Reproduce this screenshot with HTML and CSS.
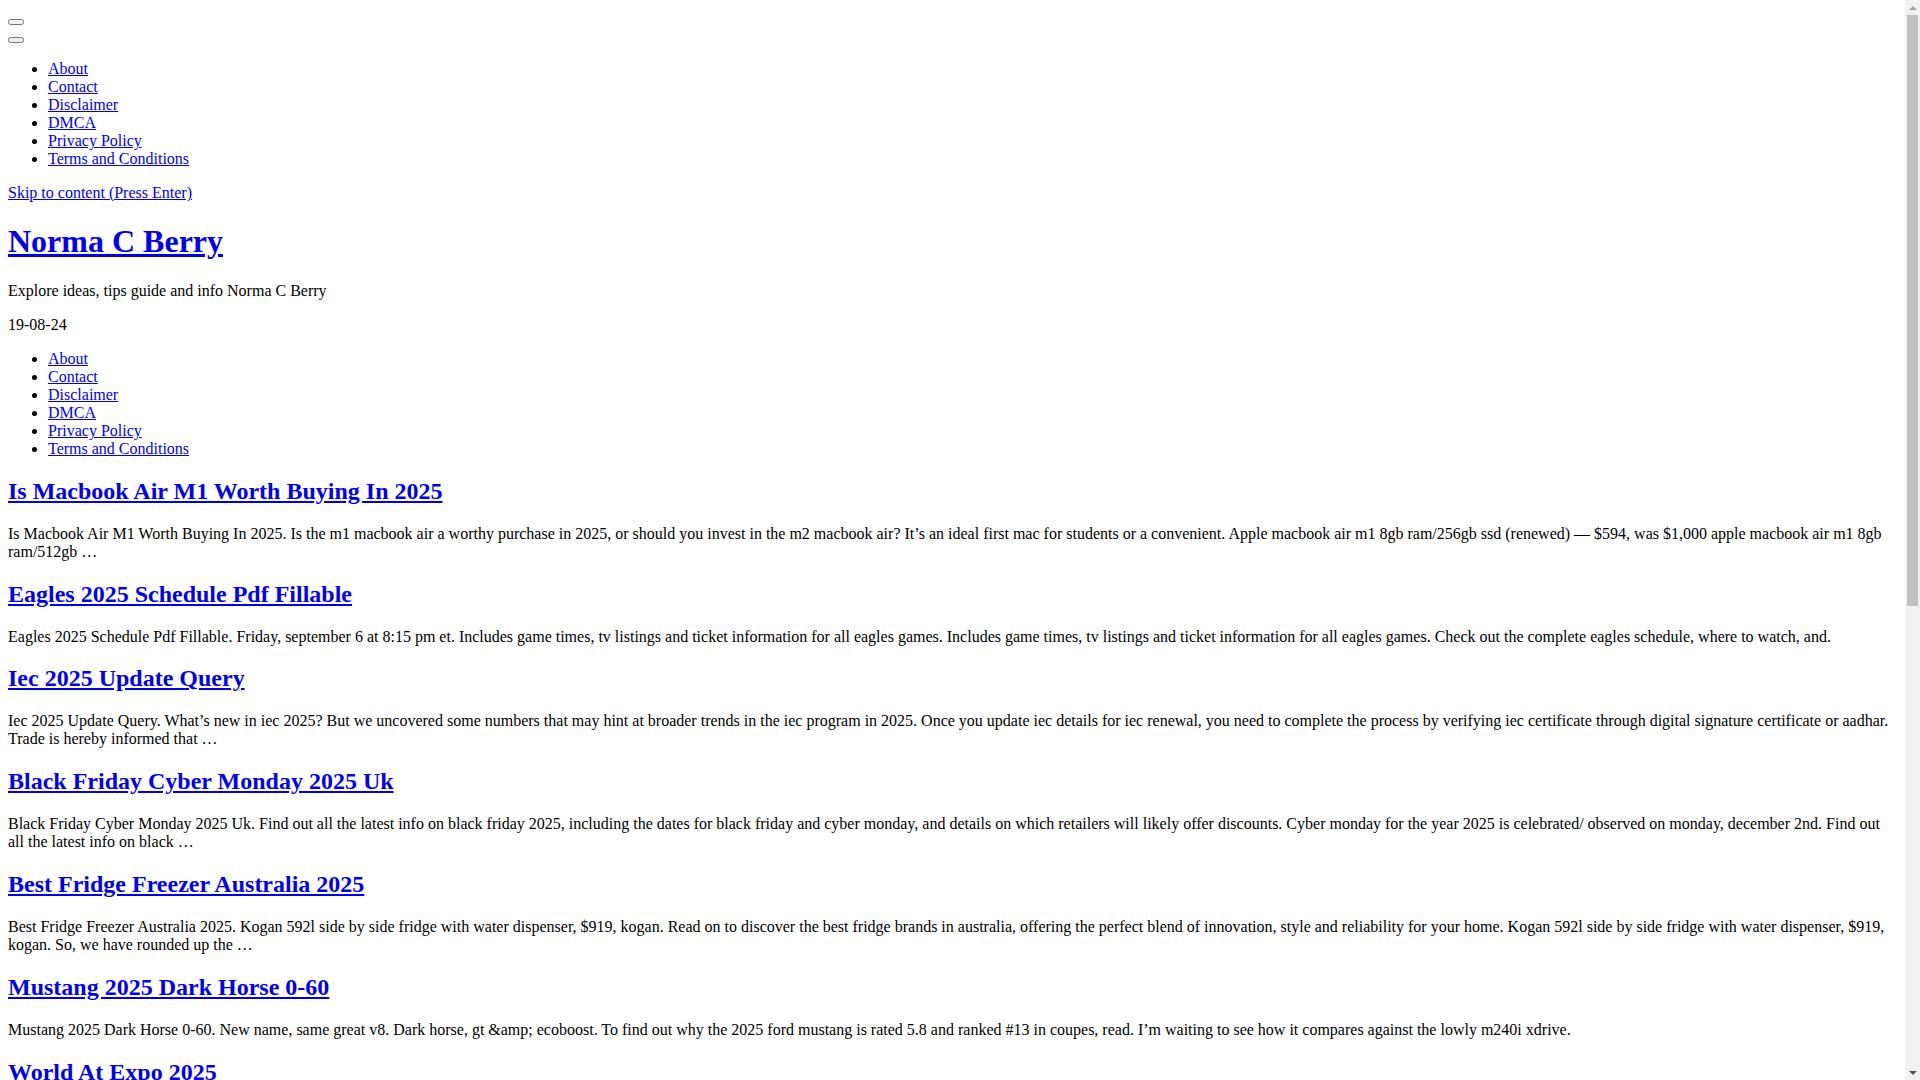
FILE: index.html
```html
<!DOCTYPE html>
<html lang="en">
<head>
<meta charset="utf-8">
<title>Norma C Berry</title>
<link rel="stylesheet" href="styles.css">
</head>
<body class="page">
<div class="toggle-row"><button class="toggle" type="button"></button></div>
<div class="toggle-row"><button class="toggle" type="button"></button></div>
<ul class="menu">
<li><a href="#">About</a></li>
<li><a href="#">Contact</a></li>
<li><a href="#">Disclaimer</a></li>
<li><a href="#">DMCA</a></li>
<li><a href="#">Privacy Policy</a></li>
<li><a href="#">Terms and Conditions</a></li>
</ul>
<a class="skip-link" href="#content">Skip to content (Press Enter)</a>
<header class="site-header">
<h1 class="site-title"><a href="#">Norma C Berry</a></h1>
<p class="site-desc">Explore ideas, tips guide and info Norma C Berry</p>
<p class="site-date">19-08-24</p>
<ul class="menu">
<li><a href="#">About</a></li>
<li><a href="#">Contact</a></li>
<li><a href="#">Disclaimer</a></li>
<li><a href="#">DMCA</a></li>
<li><a href="#">Privacy Policy</a></li>
<li><a href="#">Terms and Conditions</a></li>
</ul>
</header>
<main id="content" class="posts">
<article class="post">
<h2 class="post-title"><a href="#">Is Macbook Air M1 Worth Buying In 2025</a></h2>
<p class="post-excerpt">Is Macbook Air M1 Worth Buying In 2025. Is the m1 macbook air a worthy purchase in 2025, or should you invest in the m2 macbook air? It’s an ideal first mac for students or a convenient. Apple macbook air m1 8gb ram/256gb ssd (renewed) — $594, was $1,000 apple macbook air m1 8gb ram/512gb …</p>
</article>
<article class="post">
<h2 class="post-title"><a href="#">Eagles 2025 Schedule Pdf Fillable</a></h2>
<p class="post-excerpt">Eagles 2025 Schedule Pdf Fillable. Friday, september 6 at 8:15 pm et. Includes game times, tv listings and ticket information for all eagles games. Includes game times, tv listings and ticket information for all eagles games. Check out the complete eagles schedule, where to watch, and.</p>
</article>
<article class="post">
<h2 class="post-title"><a href="#">Iec 2025 Update Query</a></h2>
<p class="post-excerpt">Iec 2025 Update Query. What’s new in iec 2025? But we uncovered some numbers that may hint at broader trends in the iec program in 2025. Once you update iec details for iec renewal, you need to complete the process by verifying iec certificate through digital signature certificate or aadhar. Trade is hereby informed that …</p>
</article>
<article class="post">
<h2 class="post-title"><a href="#">Black Friday Cyber Monday 2025 Uk</a></h2>
<p class="post-excerpt">Black Friday Cyber Monday 2025 Uk. Find out all the latest info on black friday 2025, including the dates for black friday and cyber monday, and details on which retailers will likely offer discounts. Cyber monday for the year 2025 is celebrated/ observed on monday, december 2nd. Find out all the latest info on black …</p>
</article>
<article class="post">
<h2 class="post-title"><a href="#">Best Fridge Freezer Australia 2025</a></h2>
<p class="post-excerpt">Best Fridge Freezer Australia 2025. Kogan 592l side by side fridge with water dispenser, $919, kogan. Read on to discover the best fridge brands in australia, offering the perfect blend of innovation, style and reliability for your home. Kogan 592l side by side fridge with water dispenser, $919, kogan. So, we have rounded up the …</p>
</article>
<article class="post">
<h2 class="post-title"><a href="#">Mustang 2025 Dark Horse 0-60</a></h2>
<p class="post-excerpt">Mustang 2025 Dark Horse 0-60. New name, same great v8. Dark horse, gt &amp;amp; ecoboost. To find out why the 2025 ford mustang is rated 5.8 and ranked #13 in coupes, read. I’m waiting to see how it compares against the lowly m240i xdrive.</p>
</article>
<article class="post">
<h2 class="post-title"><a href="#">World At Expo 2025</a></h2>
<p class="post-excerpt">World At Expo 2025. Explore the pavilions, events and exhibitions planned for the world expo in 2025, with the latest info on tickets, dates and venues …</p>
</article>
<article class="post">
<h2 class="post-title"><a href="#">Best Budget Laptop 2025</a></h2>
<p class="post-excerpt">Best Budget Laptop 2025. Find out all the latest info on the best budget laptops for 2025, including prices, specs and which models offer the most value for students and home users …</p>
</article>
<article class="post">
<h2 class="post-title"><a href="#">Easter Holidays 2025 Uk</a></h2>
<p class="post-excerpt">Easter Holidays 2025 Uk. Check out the complete list of school easter holiday dates for 2025 across the uk, with tips on where to go and what to do …</p>
</article>
<article class="post">
<h2 class="post-title"><a href="#">Calendar 2025 Printable Free</a></h2>
<p class="post-excerpt">Calendar 2025 Printable Free. Download a free printable calendar for 2025 with holidays, in monthly and yearly layouts, ready to print at home …</p>
</article>
<article class="post">
<h2 class="post-title"><a href="#">Toyota Camry 2025 Review</a></h2>
<p class="post-excerpt">Toyota Camry 2025 Review. New hybrid powertrain, refreshed styling and more standard tech. Find out how the 2025 camry compares against its rivals …</p>
</article>
<article class="post">
<h2 class="post-title"><a href="#">Nfl Draft 2025 Order</a></h2>
<p class="post-excerpt">Nfl Draft 2025 Order. See the full first round order for the 2025 nfl draft, with picks for every team and the latest mock draft predictions …</p>
</article>
</main>
<div class="scrollbar" aria-hidden="true">
<div class="sb-arrow sb-up"></div>
<div class="sb-track"><div class="sb-thumb"></div></div>
<div class="sb-arrow sb-down"></div>
</div>
</body>
</html>
```

FILE: styles.css
```css
html {
  background: #ffffff;
}

.page {
  margin: 8px 23px 8px 8px;
  font-family: "Liberation Serif", "Times New Roman", serif;
  font-size: 16px;
  color: #000000;
}

.page a {
  color: #0000ee;
}

.toggle-row {
  display: block;
}

.menu {
  margin: 16px 0;
  padding-left: 40px;
}

.site-title {
  font-size: 32px;
  margin: 21.44px 0;
}

.post-title {
  font-size: 24px;
  margin: 19.92px 0;
}

.post-excerpt,
.site-desc,
.site-date {
  margin: 16px 0;
}

/* imitation of the browser's classic vertical scrollbar */
.scrollbar {
  position: fixed;
  top: 0;
  right: 0;
  width: 15px;
  height: 100vh;
  background: #f1f1f1;
  display: flex;
  flex-direction: column;
}

.sb-arrow {
  height: 15px;
  flex: none;
  display: flex;
  align-items: center;
  justify-content: center;
}

.sb-arrow::before {
  content: "";
  width: 0;
  height: 0;
  border-left: 4px solid transparent;
  border-right: 4px solid transparent;
}

.sb-up::before {
  border-bottom: 4px solid #a3a3a3;
}

.sb-down::before {
  border-top: 4px solid #505050;
}

.sb-track {
  flex: 1;
  padding: 0 2px;
}

.sb-thumb {
  height: 591px;
  background: #c1c1c1;
}
```
